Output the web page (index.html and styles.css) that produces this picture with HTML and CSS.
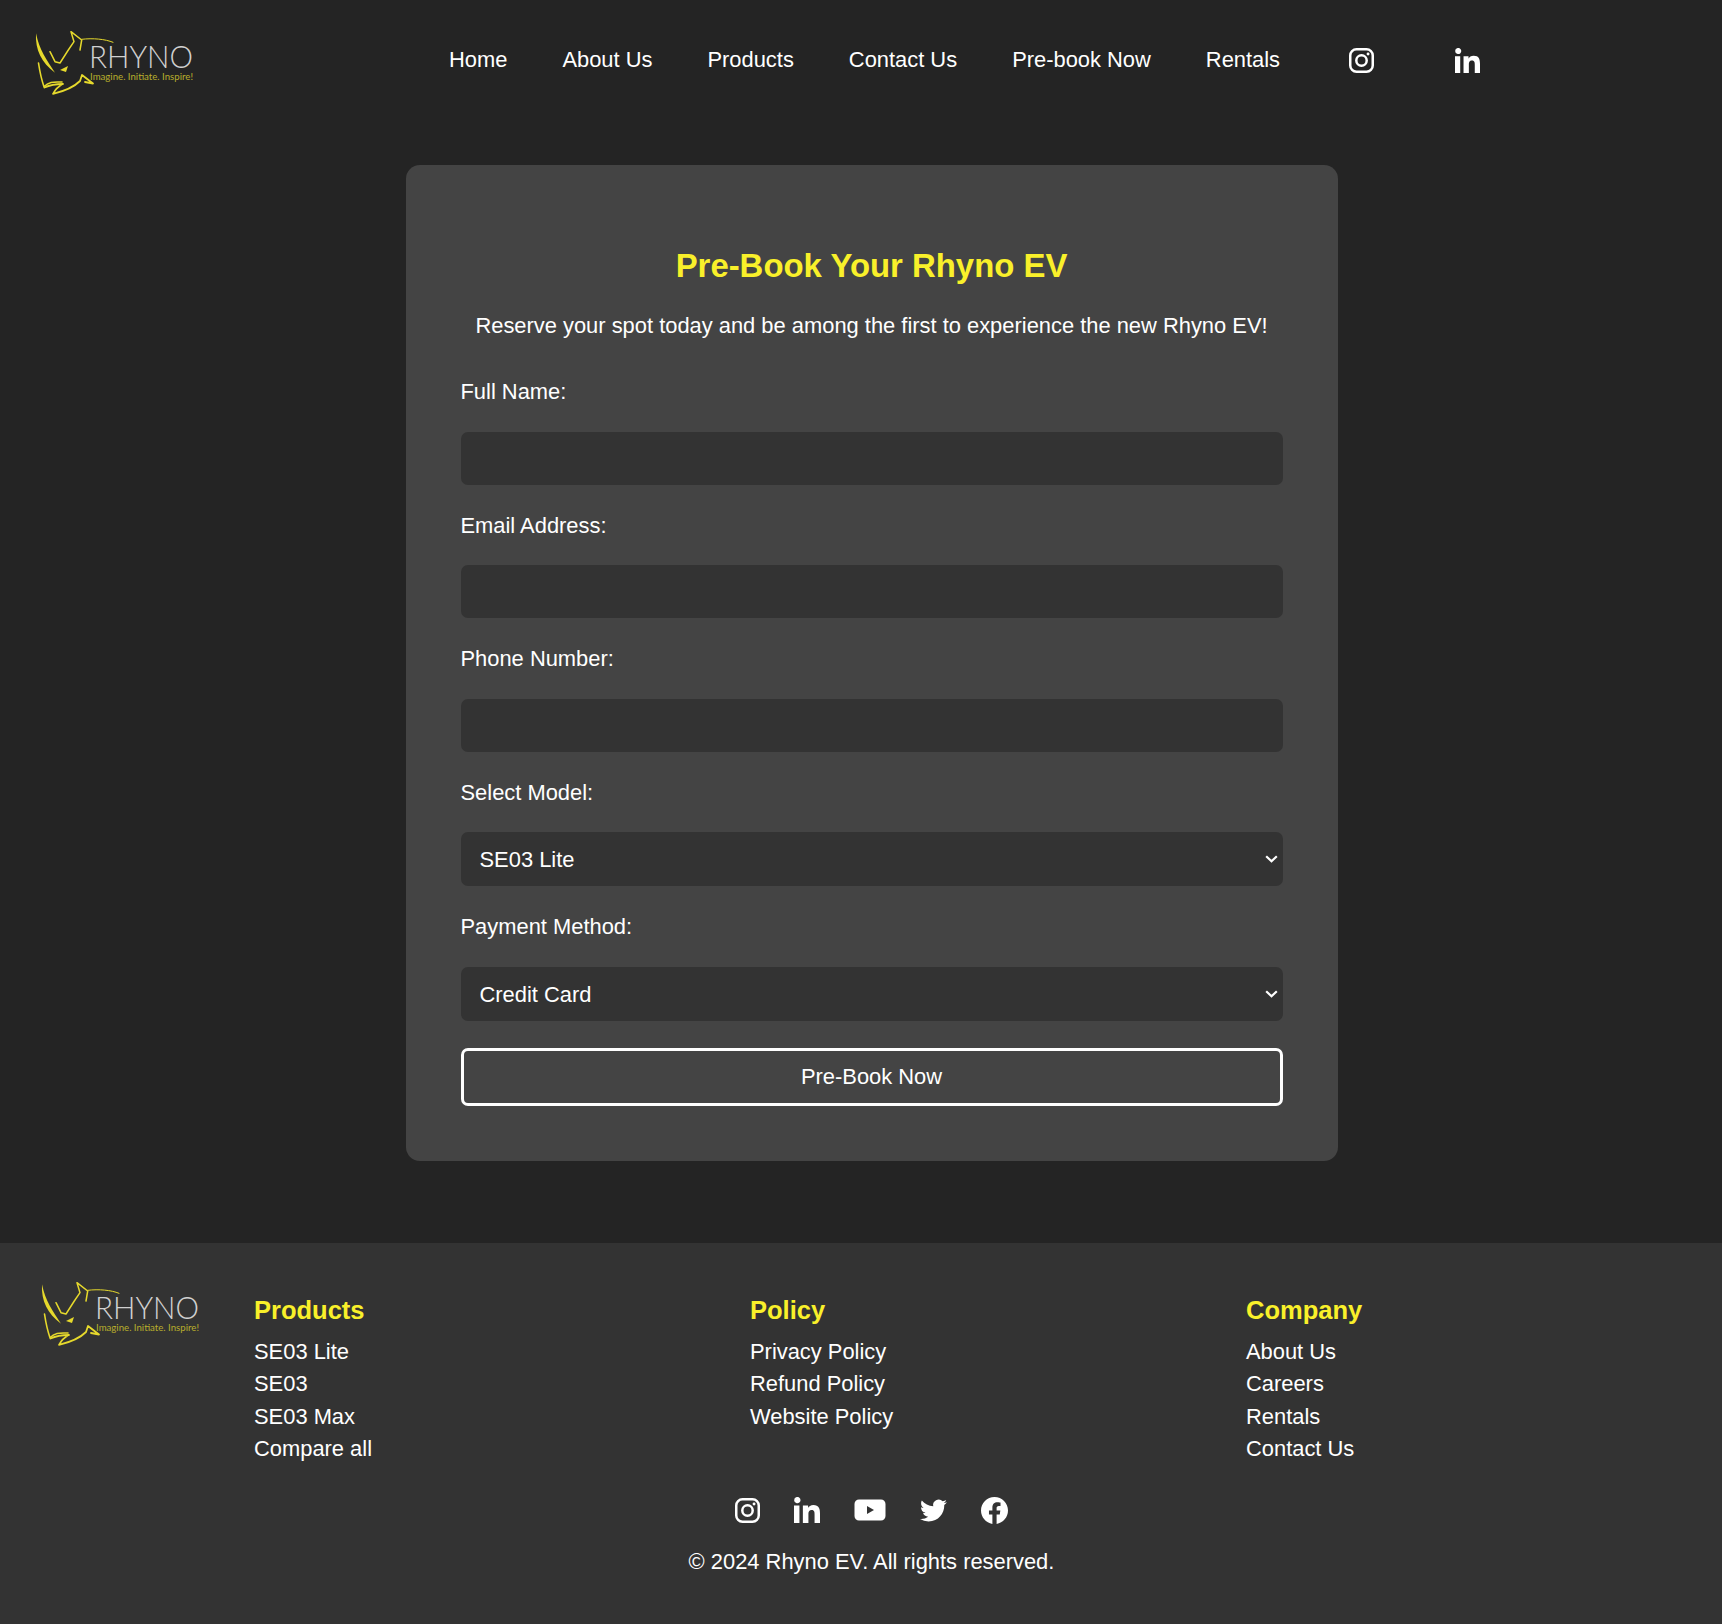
FILE: index.html
```html
<!DOCTYPE html>
<html lang="en">
<head>
<meta charset="utf-8">
<title>Pre-Book Your Rhyno EV</title>
<link rel="stylesheet" href="styles.css">
</head>
<body>
<svg class="defs" width="0" height="0" aria-hidden="true">
  <defs>
    <symbol id="logo" viewBox="0 0 165 66">
      <g fill="#e6d92c" stroke="none">
        <path d="M1 2.300C0 19 6.700 32 20 41.700C11.700 29 4.300 19 1 2.300Z"/>
        <path d="M25 39L33 35L31 41L28 40Z"/>
      </g>
      <g fill="none" stroke="#e6d92c" stroke-linejoin="round" stroke-linecap="round">
        <path d="M15 20.700L20 30.700L25 32L33.300 19L39 10.700L36 .700L46.700 9L45 19" stroke-width="1.500"/>
        <path d="M46.700 8.300C58 7 70 8 78 11.300" stroke-width="1"/>
        <path d="M3.500 32C5 42 7 50 9 55.700C14 50 20 51 27 51" stroke-width="1.600"/>
        <path d="M9.500 56.500C17 53 24 53 28 53C22 56 20 59 18 62.800C30 60 38 57 45 50L47 44L58 52.500L50 51" stroke-width="1.800"/>
      </g>
      <text class="logo-name" x="54" y="37" textLength="104" lengthAdjust="spacingAndGlyphs">RHYNO</text>
      <text class="logo-tag" x="55" y="49" textLength="103" lengthAdjust="spacingAndGlyphs">Imagine. Initiate. Inspire!</text>
    </symbol>
    <symbol id="i-instagram" viewBox="0 0 24 24">
      <rect x="1.200" y="1.200" width="21.600" height="21.600" rx="6" fill="none" stroke="currentColor" stroke-width="2.400"/>
      <circle cx="12" cy="12" r="5" fill="none" stroke="currentColor" stroke-width="2.400"/>
      <circle cx="18.300" cy="5.700" r="1.400" fill="currentColor"/>
    </symbol>
    <symbol id="i-linkedin" viewBox="1 1 22 22">
      <path fill="currentColor" d="M1 8.200h4.600V23H1zM3.300 1a2.700 2.700 0 1 1 0 5.300 2.700 2.700 0 0 1 0-5.300zM8.500 8.200h4.400v2h.1c.6-1.200 2.100-2.400 4.400-2.400 4.700 0 5.600 3.100 5.600 7.100V23H18.400v-7.100c0-1.700 0-3.900-2.400-3.900s-2.800 1.900-2.800 3.800V23H8.500z"/>
    </symbol>
    <symbol id="i-youtube" viewBox="0 0 32 24">
      <path fill="currentColor" fill-rule="evenodd" d="M5 1.500h22a4.500 4.500 0 0 1 4.500 4.500v12a4.500 4.500 0 0 1-4.500 4.500H5A4.500 4.500 0 0 1 .5 18V6A4.500 4.500 0 0 1 5 1.500zM13 8v8l7-4z"/>
    </symbol>
    <symbol id="i-twitter" viewBox="0 0 24 24">
      <path fill="currentColor" d="M23.950 4.570a10 10 0 0 1-2.820.770 4.960 4.960 0 0 0 2.160-2.720c-.950.550-2 .960-3.130 1.190a4.920 4.920 0 0 0-8.380 4.480C7.690 8.090 4.070 6.130 1.640 3.160a4.820 4.820 0 0 0-.670 2.480c0 1.710.870 3.210 2.190 4.100a4.900 4.900 0 0 1-2.230-.620v.060a4.920 4.920 0 0 0 3.950 4.830 5 5 0 0 1-2.210.080 4.940 4.940 0 0 0 4.600 3.420A9.870 9.870 0 0 1 0 19.540a14 14 0 0 0 7.560 2.210c9.050 0 14-7.500 14-13.980 0-.210 0-.420-.020-.640a9.940 9.940 0 0 0 2.410-2.560z"/>
    </symbol>
    <symbol id="i-facebook" viewBox="0 0 24 24">
      <path fill="currentColor" d="M24 12.070C24 5.400 18.630 0 12 0S0 5.400 0 12.070c0 6.030 4.390 11.020 10.130 11.930v-8.440H7.080v-3.490h3.050V9.410c0-3.020 1.790-4.690 4.530-4.690 1.310 0 2.680.240 2.680.240v2.970h-1.510c-1.490 0-1.960.930-1.960 1.880v2.260h3.330l-.530 3.490h-2.800V24C19.610 23.090 24 18.100 24 12.070z"/>
    </symbol>
    <symbol id="i-chevron" viewBox="0 0 13 8">
      <path d="M1.200 1.200L6.500 6.300L11.800 1.200" fill="none" stroke="currentColor" stroke-width="2.200"/>
    </symbol>
  </defs>
</svg>

<header class="site-header">
  <a class="header-logo" href="#"><svg class="logo"><use href="#logo"/></svg></a>
  <nav class="main-nav">
    <a href="#">Home</a>
    <a href="#">About Us</a>
    <a href="#">Products</a>
    <a href="#">Contact Us</a>
    <a href="#">Pre-book Now</a>
    <a href="#">Rentals</a>
    <a class="nav-icon nav-ig" href="#" aria-label="Instagram"><svg><use href="#i-instagram"/></svg></a>
    <a class="nav-icon nav-in" href="#" aria-label="LinkedIn"><svg><use href="#i-linkedin"/></svg></a>
  </nav>
</header>

<main class="page-main">
  <form class="card">
    <h1>Pre-Book Your Rhyno EV</h1>
    <p class="intro">Reserve your spot today and be among the first to experience the new Rhyno EV!</p>
    <div class="field"><label for="n">Full Name:</label><input id="n" type="text"></div>
    <div class="field"><label for="e">Email Address:</label><input id="e" type="email"></div>
    <div class="field"><label for="p">Phone Number:</label><input id="p" type="tel"></div>
    <div class="field"><label for="m">Select Model:</label>
      <div class="select-wrap">
        <select id="m"><option>SE03 Lite</option><option>SE03</option><option>SE03 Max</option></select>
        <svg class="chevron" aria-hidden="true"><use href="#i-chevron"/></svg>
      </div></div>
    <div class="field"><label for="c">Payment Method:</label>
      <div class="select-wrap">
        <select id="c"><option>Credit Card</option><option>Debit Card</option><option>UPI</option></select>
        <svg class="chevron" aria-hidden="true"><use href="#i-chevron"/></svg>
      </div></div>
    <button type="button">Pre-Book Now</button>
  </form>
</main>

<footer class="site-footer">
  <div class="footer-top">
    <a class="footer-logo" href="#"><svg class="logo"><use href="#logo"/></svg></a>
    <div class="footer-cols">
      <div class="footer-col">
        <h3>Products</h3>
        <a href="#">SE03 Lite</a><a href="#">SE03</a><a href="#">SE03 Max</a><a href="#">Compare all</a>
      </div>
      <div class="footer-col">
        <h3>Policy</h3>
        <a href="#">Privacy Policy</a><a href="#">Refund Policy</a><a href="#">Website Policy</a>
      </div>
      <div class="footer-col">
        <h3>Company</h3>
        <a href="#">About Us</a><a href="#">Careers</a><a href="#">Rentals</a><a href="#">Contact Us</a>
      </div>
    </div>
  </div>
  <div class="social">
    <a href="#" aria-label="Instagram"><svg class="s-ig"><use href="#i-instagram"/></svg></a>
    <a href="#" aria-label="LinkedIn"><svg class="s-in"><use href="#i-linkedin"/></svg></a>
    <a href="#" aria-label="YouTube"><svg class="s-yt"><use href="#i-youtube"/></svg></a>
    <a href="#" aria-label="Twitter"><svg class="s-tw"><use href="#i-twitter"/></svg></a>
    <a href="#" aria-label="Facebook"><svg class="s-fb"><use href="#i-facebook"/></svg></a>
  </div>
  <p class="copyright">© 2024 Rhyno EV. All rights reserved.</p>
</footer>
</body>
</html>
```
FILE: styles.css
```css
* { box-sizing: border-box; }
html, body { margin: 0; padding: 0; }
body {
  background: #242424;
  color: #fff;
  font-family: "Liberation Sans", Arial, sans-serif;
  font-size: 21.900px;
  height: 1624px;
  display: flex;
  flex-direction: column;
}
a { color: inherit; text-decoration: none; }
.defs { position: absolute; }
.logo { display: block; width: 165px; height: 66px; }
.logo-name { font-family: Lato, "Liberation Sans", sans-serif; font-weight: 300; font-size: 31px; fill: #d0d0d0; }
.logo-tag { font-family: Lato, "Liberation Sans", sans-serif; font-size: 9.500px; fill: #b8ae2c; }

.site-header { height: 120px; padding: 31px 0 0 35px; display: flex; align-items: flex-start; }
.header-logo { width: 414px; flex: none; }
.main-nav { display: flex; align-items: center; gap: 55px; height: 30px; margin-top: 14px; }
.nav-icon { display: block; width: 25px; height: 25px; color: #fff; }
.nav-icon svg { display: block; width: 100%; height: 100%; }
.nav-ig { margin-left: 14px; }
.nav-in { margin-left: 26px; }

.page-main { flex: none; height: 1123px; padding: 45px 0 0 21px; display: flex; justify-content: center; }
.card {
  width: 932px;
  height: 996px;
  background: #444;
  border-radius: 14px;
  padding: 55px;
}
h1 {
  margin: 22.500px 0 0;
  height: 46px;
  line-height: 46px;
  text-align: center;
  font-size: 32.900px;
  color: #f9f02a;
  font-weight: 700;
}
.intro { margin: 18.500px 0 0; height: 38px; line-height: 38px; text-align: center; }
.field { margin-top: 27px; }
.intro + .field { margin-top: 33px; }
label { display: block; height: 28px; line-height: 28px; margin-bottom: 25.500px; }
input, select {
  display: block;
  width: 100%;
  height: 53px;
  border: 0;
  border-radius: 7px;
  background: #333;
  color: #fff;
  font: inherit;
  padding: 0 19px;
}
select { height: 54px; appearance: none; -webkit-appearance: none; padding-top: 1px; }
.select-wrap { position: relative; }
.chevron {
  position: absolute;
  right: 5px;
  top: 23px;
  width: 13px;
  height: 8px;
  color: #fff;
  pointer-events: none;
}
button {
  display: block;
  width: 100%;
  height: 58px;
  margin-top: 27px;
  background: transparent;
  color: #fff;
  border: 3px solid #fff;
  border-radius: 7px;
  font: inherit;
}

.site-footer { flex: 1; background: #333; padding: 39px 0 0 41px; }
.footer-top { display: flex; align-items: flex-start; }
.footer-logo { width: 213px; flex: none; }
.footer-cols { flex: 1; display: grid; grid-template-columns: 496px 496px 1fr; margin-top: 10px; }
.footer-col { display: flex; flex-direction: column; }
.footer-col h3 { margin: 0 0 8px; font-size: 25.500px; line-height: 36px; color: #f9f02a; }
.footer-col a { line-height: 32.400px; }
.social { display: flex; justify-content: center; align-items: center; gap: 34px; margin: 29.500px 0 0 -20px; height: 30px; }
.social a { display: block; }
.social svg { display: block; width: 27px; height: 27px; }
.social .s-ig { width: 25px; height: 25px; }
.social .s-in { width: 26px; height: 26px; }
.social .s-yt { width: 32px; height: 24px; }
.copyright { margin: 22px 0 0 -20px; text-align: center; line-height: 30px; }
```
